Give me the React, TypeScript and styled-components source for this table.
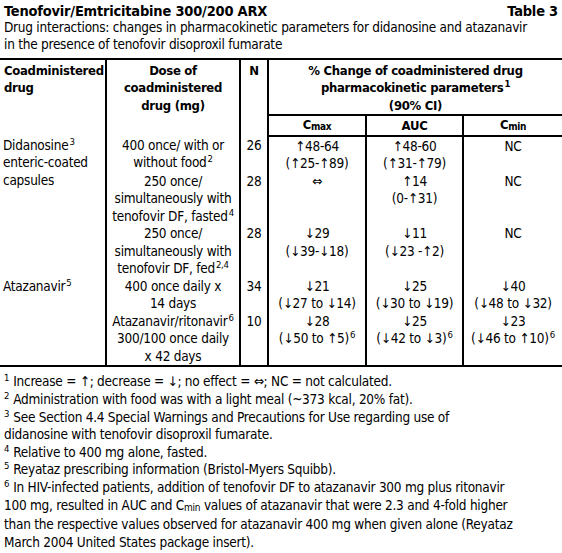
import React from "react";
import styled, { createGlobalStyle } from "styled-components";

const Global = createGlobalStyle`
  html, body { margin: 0; padding: 0; background: #fff; }
  body { font-family: "DejaVu Sans Condensed", "Liberation Sans", sans-serif; color: #000; }
`;

const Page = styled.div`
  width: 562px;
  padding-top: 3px;
`;

const TitleBar = styled.div`
  display: flex;
  justify-content: space-between;
  padding: 0 4px;
  font-weight: bold;
  font-size: 14.5px;
  letter-spacing: -0.2px;
  line-height: 16px;
`;

const Caption = styled.p`
  margin: 0;
  padding: 0 4px;
  font-size: 13.5px;
  letter-spacing: -0.25px;
  line-height: 17px;
`;

const Table = styled.table`
  width: 562px;
  margin-top: 5px;
  border-collapse: collapse;
  table-layout: fixed;
  border-top: 2px solid #000;
  border-bottom: 2px solid #000;
  font-size: 13.5px;
  letter-spacing: -0.25px;
`;

const Head = styled.th<{ $align?: string; $first?: boolean; $under?: boolean }>`
  font-weight: bold;
  font-size: 13px;
  letter-spacing: -0.3px;
  white-space: nowrap;
  text-align: ${(p) => p.$align || "center"};
  vertical-align: top;
  padding: 2px 4px 0;
  line-height: 17.3px;
  border-left: ${(p) => (p.$first ? "none" : "2px solid #000")};
  border-bottom: ${(p) => (p.$under ? "2px solid #000" : "none")};
`;

const SubHead = styled.th`
  font-weight: bold;
  font-size: 13px;
  letter-spacing: -0.3px;
  text-align: center;
  vertical-align: middle;
  padding: 0 4px;
  height: 19px;
  line-height: 17px;
  border-left: 2px solid #000;
  border-bottom: 2px solid #000;
`;

const Row = styled.tr<{ $lead?: boolean }>`
  & > td {
    padding-top: ${(p) => (p.$lead ? "1px" : "0")};
  }
`;

const Cell = styled.td<{ $align?: string; $first?: boolean }>`
  text-align: ${(p) => p.$align || "center"};
  vertical-align: top;
  padding: 0 3px;
  line-height: 17.5px;
  white-space: nowrap;
  border-left: ${(p) => (p.$first ? "none" : "2px solid #000")};
`;

const Sup = styled.sup`
  font-size: 9.5px;
  line-height: 0;
  vertical-align: 5px;
  margin-left: 1px;
`;

const Sub = styled.span`
  font-size: 10px;
  vertical-align: -1px;
`;

const Notes = styled.div`
  padding: 6px 4px 0;
  font-size: 13.5px;
  letter-spacing: -0.25px;
  line-height: 17.6px;
`;

const Note = styled.p`
  margin: 0;
`;

const NoteNum = styled.sup`
  font-size: 9.5px;
  line-height: 0;
  vertical-align: 5px;
  margin-right: 4px;
`;

const C = ({ s }: { s: string }) => (
  <>
    C<Sub>{s}</Sub>
  </>
);

export default function App() {
  return (
    <Page>
      <Global />
      <TitleBar>
        <span>Tenofovir/Emtricitabine 300/200 ARX</span>
        <span>Table 3</span>
      </TitleBar>
      <Caption>
        Drug interactions: changes in pharmacokinetic parameters for didanosine and atazanavir
        <br />
        in the presence of tenofovir disoproxil fumarate
      </Caption>
      <Table>
        <colgroup>
          <col style={{ width: 106 }} />
          <col style={{ width: 134 }} />
          <col style={{ width: 28 }} />
          <col style={{ width: 98 }} />
          <col style={{ width: 97 }} />
          <col style={{ width: 99 }} />
        </colgroup>
        <thead>
          <tr>
            <Head rowSpan={2} $align="left" $first>
              Coadministered
              <br />
              drug
            </Head>
            <Head rowSpan={2}>
              Dose of
              <br />
              coadministered
              <br />
              drug (mg)
            </Head>
            <Head rowSpan={2}>N</Head>
            <Head colSpan={3} $under>
              % Change of coadministered drug
              <br />
              pharmacokinetic parameters<Sup>1</Sup>
              <br />
              (90% CI)
            </Head>
          </tr>
          <tr>
            <SubHead>
              <C s="max" />
            </SubHead>
            <SubHead>AUC</SubHead>
            <SubHead>
              <C s="min" />
            </SubHead>
          </tr>
        </thead>
        <tbody>
          <Row $lead>
            <Cell rowSpan={3} $align="left" $first>
              Didanosine<Sup>3</Sup>
              <br />
              enteric-coated
              <br />
              capsules
            </Cell>
            <Cell>
              400 once/ with or
              <br />
              without food<Sup>2</Sup>
            </Cell>
            <Cell>26</Cell>
            <Cell>
              ↑48-64
              <br />
              (↑25-↑89)
            </Cell>
            <Cell>
              ↑48-60
              <br />
              (↑31-↑79)
            </Cell>
            <Cell>NC</Cell>
          </Row>
          <Row>
            <Cell>
              250 once/
              <br />
              simultaneously with
              <br />
              tenofovir DF, fasted<Sup>4</Sup>
            </Cell>
            <Cell>28</Cell>
            <Cell>⇔</Cell>
            <Cell>
              ↑14
              <br />
              (0-↑31)
            </Cell>
            <Cell>NC</Cell>
          </Row>
          <Row>
            <Cell>
              250 once/
              <br />
              simultaneously with
              <br />
              tenofovir DF, fed<Sup>2,4</Sup>
            </Cell>
            <Cell>28</Cell>
            <Cell>
              ↓29
              <br />
              (↓39-↓18)
            </Cell>
            <Cell>
              ↓11
              <br />
              (↓23 -↑2)
            </Cell>
            <Cell>NC</Cell>
          </Row>
          <Row>
            <Cell rowSpan={2} $align="left" $first>
              Atazanavir<Sup>5</Sup>
            </Cell>
            <Cell>
              400 once daily x
              <br />
              14 days
            </Cell>
            <Cell>34</Cell>
            <Cell>
              ↓21
              <br />
              (↓27 to ↓14)
            </Cell>
            <Cell>
              ↓25
              <br />
              (↓30 to ↓19)
            </Cell>
            <Cell>
              ↓40
              <br />
              (↓48 to ↓32)
            </Cell>
          </Row>
          <Row>
            <Cell>
              Atazanavir/ritonavir<Sup>6</Sup>
              <br />
              300/100 once daily
              <br />x 42 days
            </Cell>
            <Cell>10</Cell>
            <Cell>
              ↓28
              <br />
              (↓50 to ↑5)<Sup>6</Sup>
            </Cell>
            <Cell>
              ↓25
              <br />
              (↓42 to ↓3)<Sup>6</Sup>
            </Cell>
            <Cell>
              ↓23
              <br />
              (↓46 to ↑10)<Sup>6</Sup>
            </Cell>
          </Row>
        </tbody>
      </Table>
      <Notes>
        <Note>
          <NoteNum>1</NoteNum>Increase = ↑; decrease = ↓; no effect = ⇔; NC = not calculated.
        </Note>
        <Note>
          <NoteNum>2</NoteNum>Administration with food was with a light meal (~373 kcal, 20% fat).
        </Note>
        <Note>
          <NoteNum>3</NoteNum>See Section 4.4 Special Warnings and Precautions for Use regarding use of
          <br />
          didanosine with tenofovir disoproxil fumarate.
        </Note>
        <Note>
          <NoteNum>4</NoteNum>Relative to 400 mg alone, fasted.
        </Note>
        <Note>
          <NoteNum>5</NoteNum>Reyataz prescribing information (Bristol-Myers Squibb).
        </Note>
        <Note>
          <NoteNum>6</NoteNum>In HIV-infected patients, addition of tenofovir DF to atazanavir 300 mg plus ritonavir
          <br />
          100 mg, resulted in AUC and <C s="min" /> values of atazanavir that were 2.3 and 4-fold higher
          <br />
          than the respective values observed for atazanavir 400 mg when given alone (Reyataz
          <br />
          March 2004 United States package insert).
        </Note>
      </Notes>
    </Page>
  );
}
